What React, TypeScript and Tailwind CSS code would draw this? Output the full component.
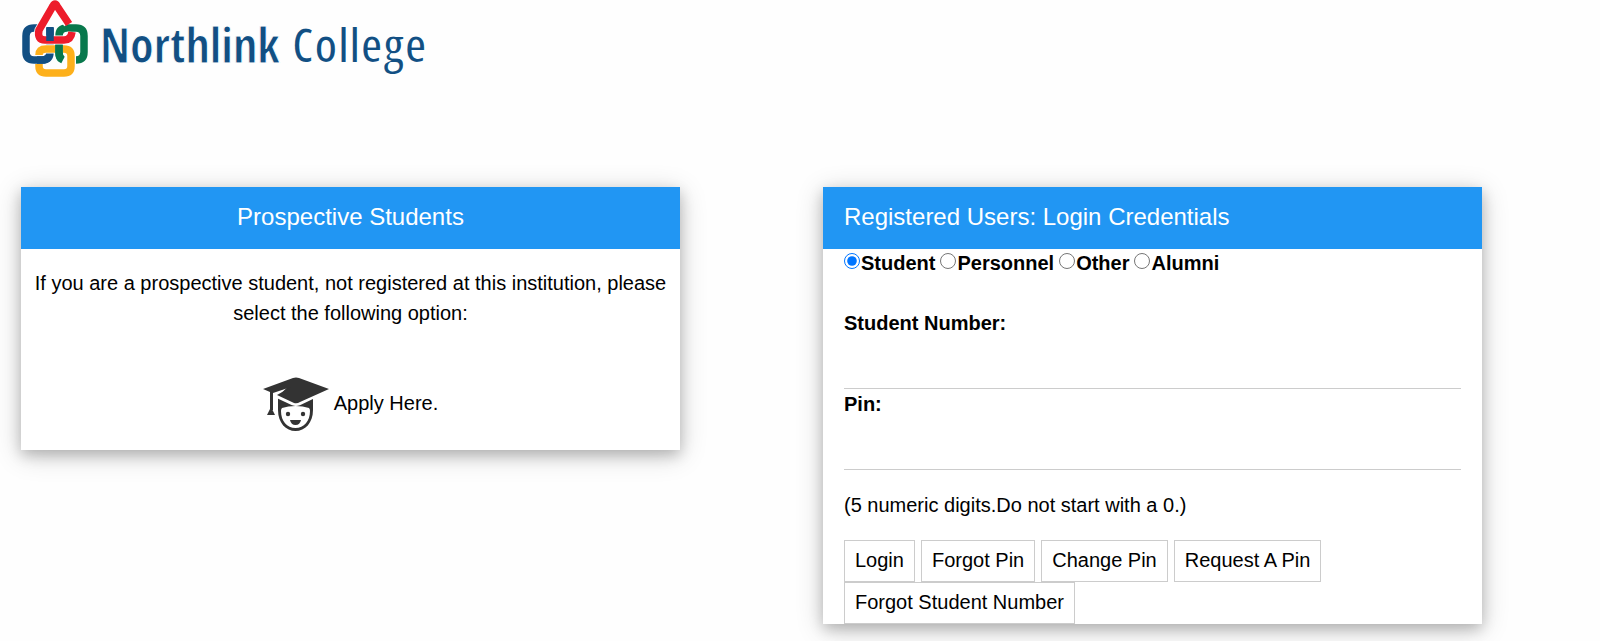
import { useState } from "react";

const userTypes = ["Student", "Personnel", "Other", "Alumni"];

const actions = ["Login", "Forgot Pin", "Change Pin", "Request A Pin", "Forgot Student Number"];

const cardClass = "bg-white shadow-[0_5px_13px_rgba(0,0,0,0.2),0_5px_26px_rgba(0,0,0,0.19)]";
const headerClass = "bg-[#2196f3] px-[21px] pt-[15px] pb-[17px] text-2xl leading-[30px] text-white";
const inputClass = "block h-[51px] w-full border-b border-[#ccc] bg-transparent py-2 outline-none";

function LogoMark() {
  return (
    <svg className="h-20 w-[70px] shrink-0" viewBox="20 0 70 80" fill="none" strokeWidth="7.5" aria-hidden="true">
      {/* blue and green links */}
      <path d="M40 28H34q-8 0-8 8v16q0 8 8 8h8q8 0 8-8V28" stroke="#124f83" />
      <path d="M76 60q8 0 8-8V36q0-8-8-8H67q-8 0-8 8v16q0 6 4 8" stroke="#08784c" />
      {/* red link over both */}
      <path d="M68 24 57 6q-2-4-4 0L39 30q-2 10 6 10h19q7 0 8-8" stroke="#fff" strokeWidth="9" />
      <path d="M69 24 57 6q-2-4-4 0L39 30q-2 10 6 10h19q7 0 8-8" stroke="#ed1c2b" />
      {/* yellow link */}
      <path d="M55 49H46q-7 0-7 6M39 64v2q0 7 7 7h18q7 0 7-7V56q0-7-7-7h-1" stroke="#fff" strokeWidth="9" />
      <path d="M55 49H46q-7 0-7 6M39 64v2q0 7 7 7h18q7 0 7-7V56q0-7-7-7h-1" stroke="#fdb01b" />
      {/* crossings that come back to the front */}
      <path d="M50 27v14M37 60h5q4 0 6-2" stroke="#124f83" />
      <path d="M59 45v8q0 4 2 6" stroke="#08784c" />
    </svg>
  );
}

function GraduateIcon() {
  return (
    <svg className="h-[55px] w-[66px] shrink-0" viewBox="0 0 66 55" fill="#333" aria-hidden="true">
      {/* head */}
      <path
        fillRule="evenodd"
        d="M15 19h35v14c0 13-8 21-17.500 21S15 46 15 33ZM18 34c0 10 6 17 14.500 17S47 44 47 34q0-2-1-3-6-2-13.500-2T19 31q-1 1-1 3Z"
      />
      <circle cx="25" cy="37" r="2.2" />
      <circle cx="40" cy="37" r="2.2" />
      <path d="M27 43h11q-1 5-5.500 5T27 43Z" />
      {/* cap, with a white edge that parts it from the hair */}
      <path d="m13 18 17 8q3 1 6 0l29-14L36 1q-3-1-6 0Z" stroke="#fff" strokeWidth="5" />
      <path d="M0 12 30 1q3-1 6 0l30 11-29 13q-3 2-6 1L14 18l14-8L10 16v17H7V15Z" />
      <path d="m8 30 4 8H4Z" />
    </svg>
  );
}

export default function App() {
  const [userType, setUserType] = useState("Student");

  return (
    <div className="min-h-screen bg-[#fefefe] font-['Liberation_Sans',Arial,sans-serif] text-xl leading-[30px] text-black">
      {/* Logo */}
      <header className="flex h-[187px] items-start gap-[10px] pl-5">
        <LogoMark />
        <h1 className="pt-[15px] font-['Open_Sans_Condensed','Open_Sans',sans-serif] text-[48px] leading-[60px] whitespace-nowrap text-[#124f83]">
          <span className="[-webkit-text-stroke:1px_#fefefe]">Northlink</span>{" "}
          <span className="[-webkit-text-stroke:2px_#fefefe]">College</span>
        </h1>
      </header>

      <main className="grid grid-cols-2 items-start gap-[143px] pr-[118px] pb-4 pl-[21px]">
        {/* Prospective students */}
        <section className={`${cardClass} text-center`}>
          <h2 className={headerClass}>Prospective Students</h2>
          <div className="px-2 pt-[19px] pb-[18px]">
            <p>If you are a prospective student, not registered at this institution, please select the following option:</p>
            <a href="#apply" className="mt-[49px] inline-flex items-start gap-[5px] align-top leading-[52px]">
              <GraduateIcon />
              Apply Here.
            </a>
          </div>
        </section>

        {/* Login */}
        <section className={cardClass}>
          <h2 className={headerClass}>Registered Users: Login Credentials</h2>
          <form className="px-[21px]" onSubmit={(e) => e.preventDefault()}>
            <div className="flex flex-wrap gap-x-[5px] leading-7 font-bold">
              {userTypes.map((type) => (
                <label key={type} className="flex gap-px">
                  <input
                    type="radio"
                    name="userType"
                    className="mt-1 size-4"
                    checked={userType === type}
                    onChange={() => setUserType(type)}
                  />
                  {type}
                </label>
              ))}
            </div>

            <label htmlFor="number" className="mt-[31px] block font-bold">Student Number:</label>
            <input id="number" type="text" className={inputClass} />
            <label htmlFor="pin" className="block font-bold">Pin:</label>
            <input id="pin" type="password" className={inputClass} />

            <p className="py-5">(5 numeric digits.Do not start with a 0.)</p>

            <div className="flex flex-wrap gap-x-[6px]">
              {actions.map((label) => (
                <button key={label} type="button" className="border border-[#ccc] bg-white px-[10px] pt-1 pb-[6px]">
                  {label}
                </button>
              ))}
            </div>
          </form>
        </section>
      </main>
    </div>
  );
}
